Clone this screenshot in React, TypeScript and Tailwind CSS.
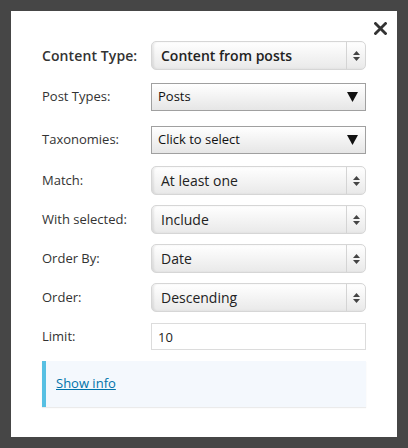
function Arrows() {
  return (
    <div className="flex h-full w-[19px] flex-col items-center justify-center gap-[2px] border-l border-[#d4d4d4]">
      <svg width="7" height="4" viewBox="0 0 7 4"><path d="M3.5 0 L7 4 L0 4 Z" fill="#444" /></svg>
      <svg width="7" height="4" viewBox="0 0 7 4"><path d="M0 0 L7 0 L3.5 4 Z" fill="#444" /></svg>
    </div>
  );
}

function FancySelect({ value, bold }: { value: string; bold?: boolean }) {
  return (
    <div className="flex h-[29px] w-[215px] items-center rounded-[5px] border border-[#d6d6d6] bg-gradient-to-b from-white to-[#e9e9e9] pl-[9px] shadow-[inset_2px_0_2px_rgba(0,0,0,0.08)]">
      <span className={"flex-1 text-[14px] text-[#222] " + (bold ? "font-semibold" : "")}>{value}</span>
      <Arrows />
    </div>
  );
}

function PlainSelect({ value }: { value: string }) {
  return (
    <div className="flex h-[28px] w-[215px] items-center border border-[#a0a0a0] bg-gradient-to-b from-white to-[#e6e6e6] pl-[6px] pr-[7px]">
      <span className="flex-1 text-[13px] text-[#111]">{value}</span>
      <svg width="11" height="10" viewBox="0 0 11 10"><path d="M0 0 L11 0 L5.5 10 Z" fill="#111" /></svg>
    </div>
  );
}

function Row({ label, bold, children, className }: { label: string; bold?: boolean; children: React.ReactNode; className?: string }) {
  return (
    <div className={"flex items-center " + (className ?? "")}>
      <label className={"w-[109px] text-[#333] " + (bold ? "text-[14px] font-semibold tracking-[0.1px]" : "text-[13px]")}>{label}</label>
      {children}
    </div>
  );
}

export default function App() {
  return (
    <div className="h-[448px] w-[408px] bg-[#464646] p-[11px] font-['Open_Sans',sans-serif]">
      <div className="relative h-[426px] w-[386px] bg-white px-[31px] pt-[30px]">
        <button className="absolute right-[10px] top-[10px] flex h-[14px] w-[14px] items-center justify-center">
          <svg width="13" height="13" viewBox="0 0 13 13">
            <path d="M1.5 1.5 L11.5 11.5 M11.5 1.5 L1.5 11.5" stroke="#333" strokeWidth="2.8" strokeLinecap="square" />
          </svg>
        </button>

        <div className="flex flex-col">
          <Row label="Content Type:" bold>
            <FancySelect value="Content from posts" bold />
          </Row>
          <Row label="Post Types:" className="mt-[13px]">
            <PlainSelect value="Posts" />
          </Row>
          <Row label="Taxonomies:" className="mt-[15px]">
            <PlainSelect value="Click to select" />
          </Row>
          <Row label="Match:" className="mt-[12px]">
            <FancySelect value="At least one" />
          </Row>
          <Row label="With selected:" className="mt-[10px]">
            <FancySelect value="Include" />
          </Row>
          <Row label="Order By:" className="mt-[10px]">
            <FancySelect value="Date" />
          </Row>
          <Row label="Order:" className="mt-[10px]">
            <FancySelect value="Descending" />
          </Row>
          <Row label="Limit:" className="mt-[11px]">
            <input
              defaultValue="10"
              className="h-[27px] w-[215px] border border-[#dcdcdc] bg-white px-[6px] text-[13px] text-[#222] outline-none"
            />
          </Row>

          <div className="mt-[11px] flex h-[46px] items-center border-l-4 border-[#57c0e3] bg-[#f4f8fd] pl-[10px] shadow-[0_1px_1px_rgba(0,0,0,0.08)]">
            <a href="#" className="text-[13px] text-[#0073aa] underline">Show info</a>
          </div>
        </div>
      </div>
    </div>
  );
}
